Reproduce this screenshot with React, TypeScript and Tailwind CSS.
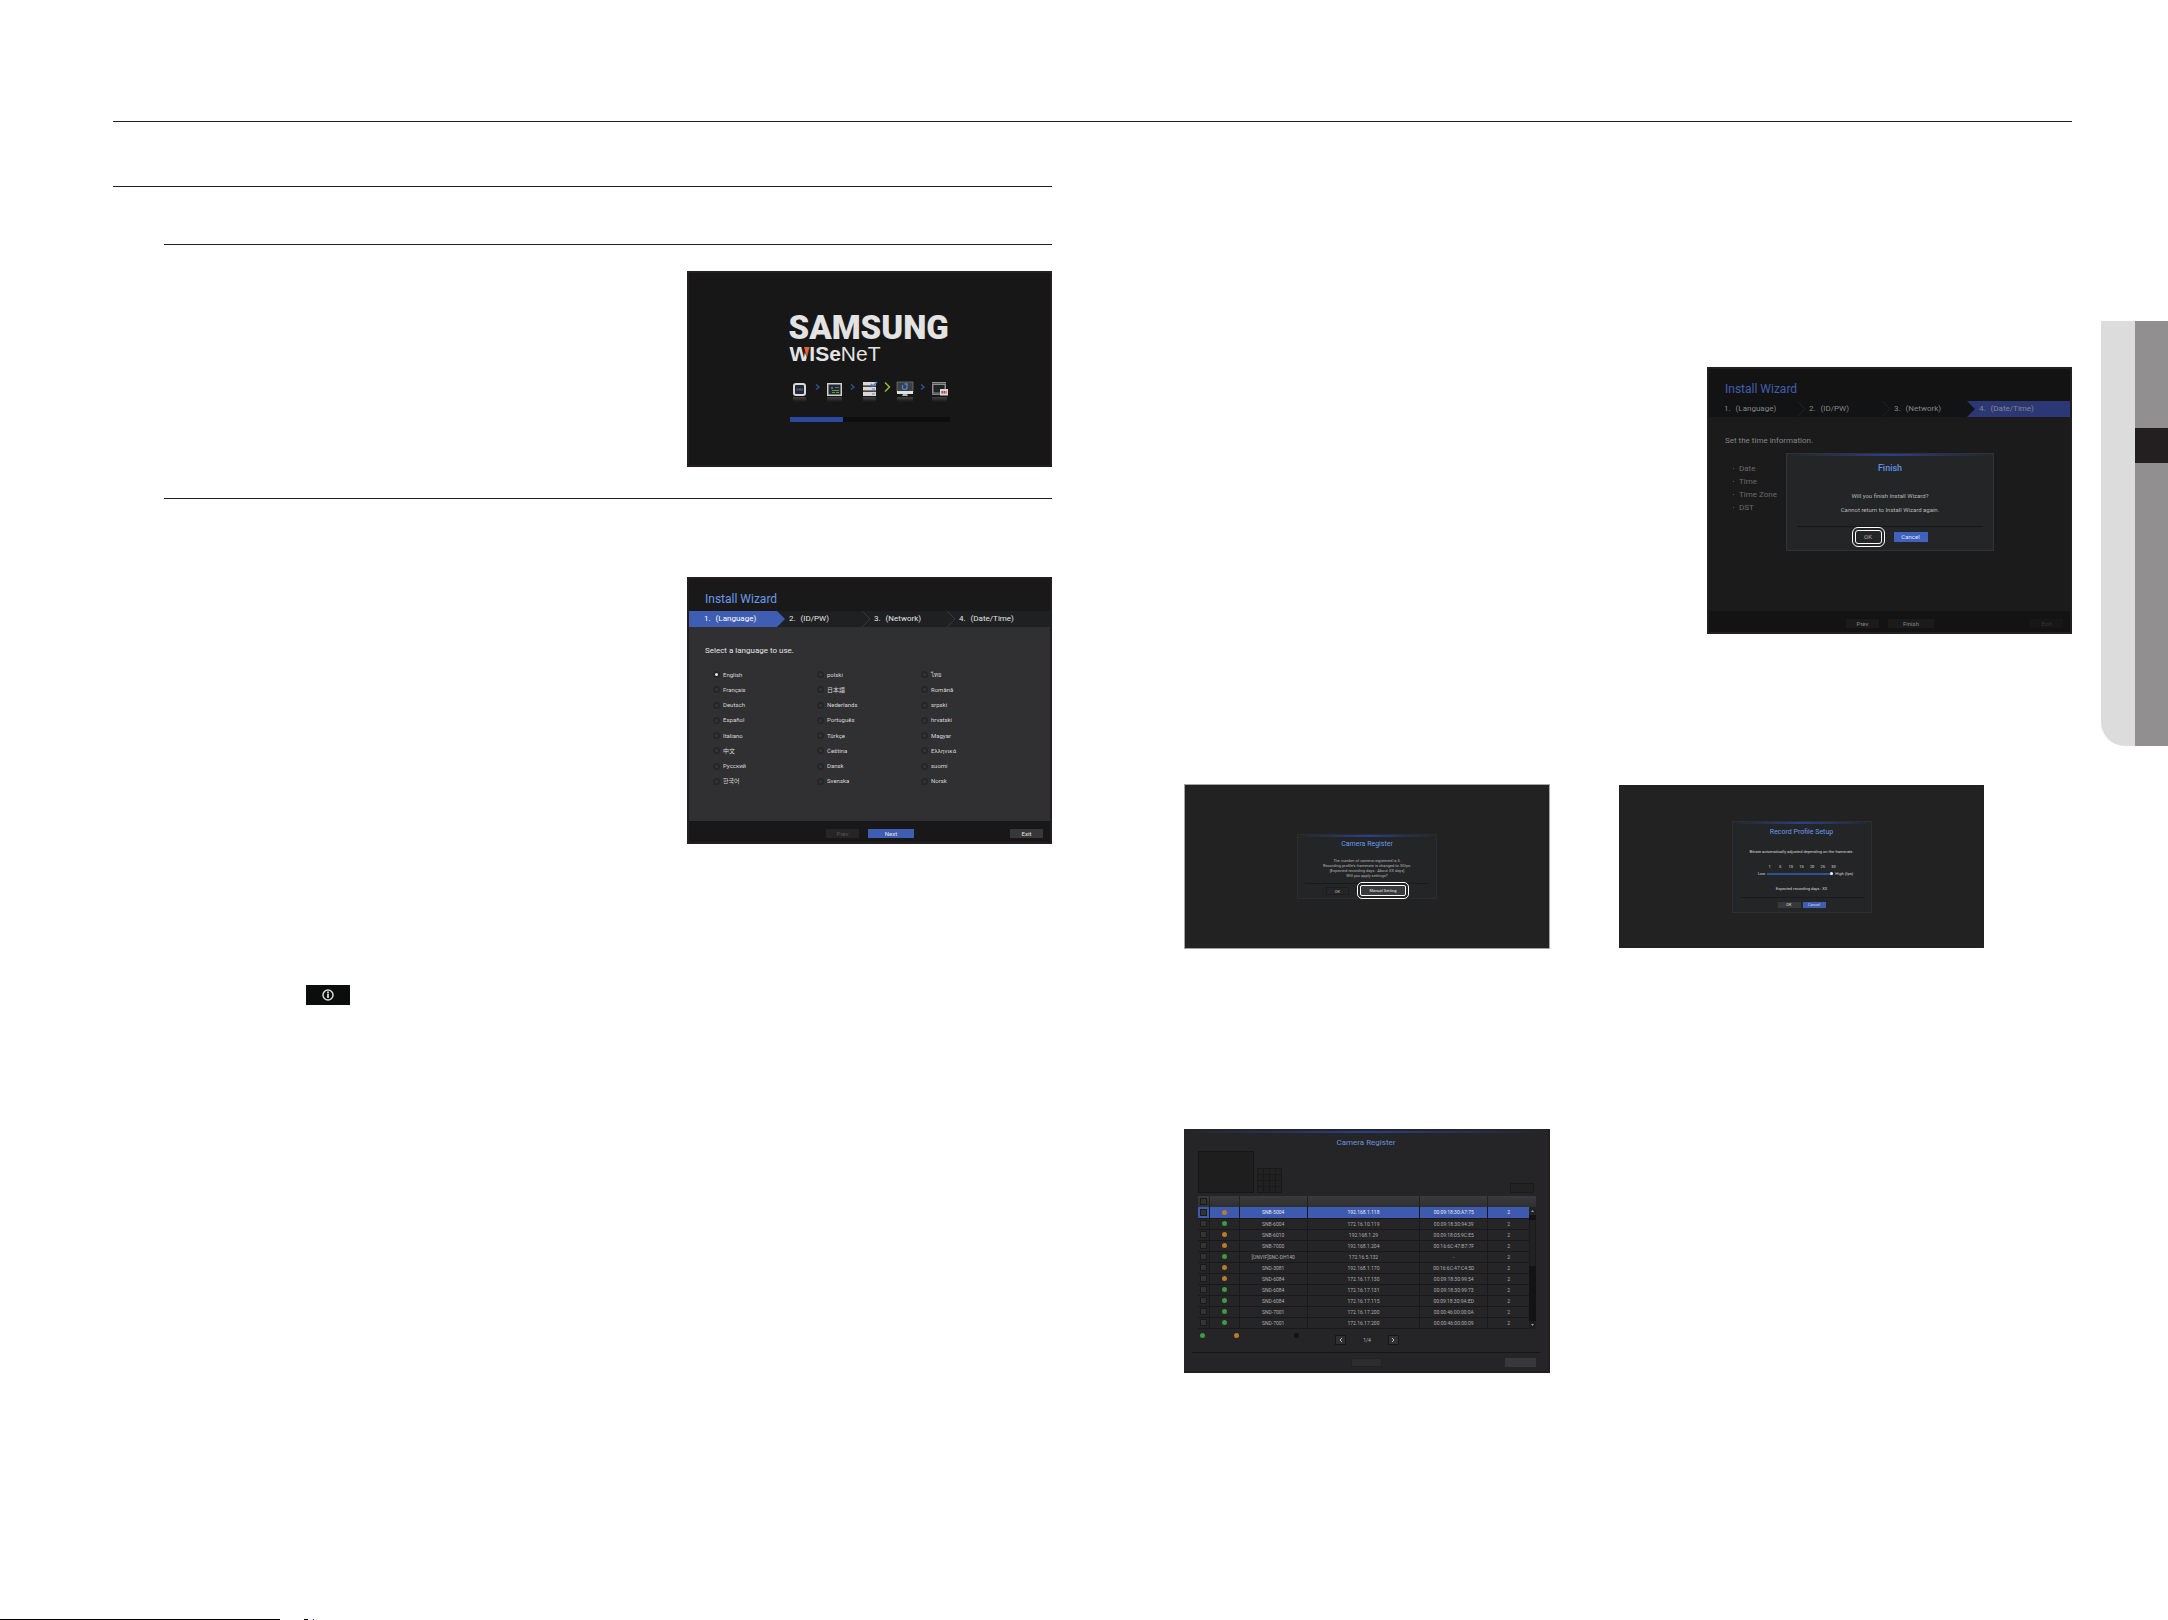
import type { ReactNode } from "react";
import clsx from "clsx";

const languages = [
  ["English", "polski", "ไทย"],
  ["Français", "日本語", "Română"],
  ["Deutsch", "Nederlands", "srpski"],
  ["Español", "Português", "hrvatski"],
  ["Italiano", "Türkçe", "Magyar"],
  ["中文", "Čeština", "Ελληνικά"],
  ["Русский", "Dansk", "suomi"],
  ["한국어", "Svenska", "Norsk"],
];

const steps = ["(Language)", "(ID/PW)", "(Network)", "(Date/Time)"];

const cameras = [
  { state: "fail", model: "SNB-5004", ip: "192.168.1.118", mac: "00:09:18:30:A7:75" },
  { state: "ok", model: "SNB-6004", ip: "172.16.10.119", mac: "00:09:18:30:94:39" },
  { state: "fail", model: "SNB-6010", ip: "192.168.1.29", mac: "00:09:18:05:9C:E5" },
  { state: "fail", model: "SNB-7000", ip: "192.168.1.204", mac: "00:16:6C:47:B7:7F" },
  { state: "ok", model: "[ONVIF]SNC-DH140", ip: "172.16.5.132", mac: "-" },
  { state: "fail", model: "SND-3081", ip: "192.168.1.170", mac: "00:16:6C:47:C4:5D" },
  { state: "fail", model: "SND-6084", ip: "172.16.17.130", mac: "00:09:18:30:99:54" },
  { state: "ok", model: "SND-6084", ip: "172.16.17.131", mac: "00:09:18:30:99:73" },
  { state: "ok", model: "SND-6084", ip: "172.16.17.115", mac: "00:09:18:30:9A:ED" },
  { state: "ok", model: "SND-7001", ip: "172.16.17.200", mac: "00:00:46:00:00:0A" },
  { state: "ok", model: "SND-7001", ip: "172.16.17.200", mac: "00:00:46:00:00:09" },
];

function Dot({ state }: { state: string }) {
  return (
    <span
      className={clsx(
        "block size-[5px] rounded-full",
        state === "ok" && "bg-[#3c9a40]",
        state === "fail" && "bg-[#b87b2a]",
        state === "off" && "bg-[#121212]"
      )}
    />
  );
}

function Glow() {
  return (
    <div className="h-[2px] bg-linear-to-r from-transparent via-[#2b3f8e] to-transparent" />
  );
}

function BootScreen() {
  return (
    <figure className="w-[365px] border-2 border-[#231f20] bg-[#171717] pt-[41px] pb-[43px]">
      <div className="mx-auto w-40">
        <div className="-ml-px whitespace-nowrap text-[33px] leading-7 font-black text-[#e4e3e3]">
          SAMSUNG
        </div>
        <div className="relative mt-0.5 font-['Liberation_Sans',sans-serif] text-[21px] leading-5 whitespace-nowrap text-[#e4e3e3]">
          <span className="font-bold">WISe</span>NeT
          <svg className="absolute top-[3px] left-[13px] h-[10px] w-[7px]" viewBox="0 0 7 10">
            <path d="M0 0H7L3.6 10Z" fill="#171717" />
            <path d="M1 0H6.5L3.7 10Z" fill="#e8622a" />
          </svg>
        </div>
        <svg className="mt-[17px] h-6 w-full" viewBox="0 0 160 24">
          <defs>
            <linearGradient id="mirror" x1="0" y1="0" x2="0" y2="1">
              <stop offset="0" stopColor="#fff" stopOpacity="0.18" />
              <stop offset="1" stopColor="#fff" stopOpacity="0" />
            </linearGradient>
          </defs>
          {/* chip */}
          <rect x="3" y="2" width="13" height="13" rx="3" fill="#d9d9d9" />
          <rect x="5" y="4" width="9" height="9" rx="1" fill="#26282b" />
          <path d="M6.5 7.5h2v2h-2zM9 7.5h2v2H9zM11.5 7.5h1.5v2h-1.5z" fill="#3c62a8" />
          {/* board */}
          <rect x="37" y="2" width="15" height="13" fill="#cfcfcf" />
          <rect x="38.5" y="3.5" width="12" height="10" fill="#26282b" />
          <path d="M41 6h2v2h-2zM45 6h4v1h-4z" fill="#3f6ec0" />
          <path d="M42 9h7v1h-7zM42 11h3v1h-3zM46 11h3v1h-3z" fill="#5e9a38" />
          {/* drives */}
          <path d="M73 1h13v3.5H73zM73 6h13v3.5H73zM73 11h13v4H73z" fill="#d9d9d9" />
          <path d="M73 4.5h13v1H73zM73 9.5h13v1H73z" fill="#777" />
          <path d="M81 3l2 2 4-4" stroke="#3f7fd6" strokeWidth="1.5" fill="none" />
          <path d="M82 8h3M82 13h3" stroke="#5f86b8" />
          {/* monitor */}
          <rect x="107" y="1" width="16" height="10" fill="#3c3f44" stroke="#85888c" strokeWidth="0.6" />
          <rect x="107" y="10" width="16" height="3" fill="#e0e0e0" />
          <path d="M113 13h4l1 2h-6z" fill="#b5b5b5" />
          <path d="M112.5 4v2.5c0 2.5 4.5 2.5 4.5 0V3h-2.5" stroke="#4a86dc" strokeWidth="1.3" fill="none" />
          {/* film */}
          <rect x="142" y="1" width="14" height="13" fill="#8d8d8d" />
          <rect x="143.5" y="4" width="11" height="7.5" fill="#202225" />
          <path d="M142.5 2.5h13M142.5 12.8h9" stroke="#202225" strokeDasharray="1 1" />
          <rect x="150" y="8" width="8" height="6.5" fill="#d8d5d5" />
          <path d="M151.5 11.3h5" stroke="#c43a3a" strokeWidth="2.5" strokeDasharray="1.5 .5" />
          <g fill="url(#mirror)">
            <rect x="3" y="16" width="13" height="5" />
            <rect x="37" y="16" width="15" height="5" />
            <rect x="73" y="16" width="13" height="5" />
            <rect x="107" y="16" width="16" height="5" />
            <rect x="142" y="16" width="15" height="5" />
          </g>
          <path d="M26 3.5l3 2.5-3 2.5M61 3.5l3 2.5-3 2.5M131 3.5l3 2.5-3 2.5" stroke="#33509f" strokeWidth="1.4" fill="none" />
          <path d="M95 1.5l4.5 4.5-4.5 4.5" stroke="#93bd2f" strokeWidth="1.5" fill="none" />
        </svg>
        <div className="mt-3 h-[5px] bg-[#0d0d0d]">
          <div className="h-full w-1/3 bg-[#2b479f]" />
        </div>
      </div>
    </figure>
  );
}

type WizardProps = { active: number; dim?: boolean; next: string; children: ReactNode };

function Wizard({ active, dim, next, children }: WizardProps) {
  const bar = dim ? "#111314" : "#1e2021";
  const blue = dim ? "#2c3876" : "#3e5db3";
  return (
    <figure
      className={clsx(
        "w-[365px] border-2 border-[#231f20]",
        dim ? "bg-[#1b1b1c] text-[#868687]" : "bg-[#303032] text-[#e4e4e4]"
      )}
    >
      <h2
        className={clsx(
          "pt-3 pb-1 pl-4 text-xs leading-4",
          dim ? "bg-[#131313] text-[#405eb2]" : "bg-[#191919] text-[#6a9bec]"
        )}
      >
        Install Wizard
      </h2>
      <ol className="grid h-4 grid-cols-[85fr_85fr_85fr_106fr] text-[8px] leading-4 whitespace-nowrap">
        {steps.map((step, i) => (
          <li
            key={step}
            className={clsx(
              "relative flex gap-[5px] pl-[15px]",
              i !== active && (dim ? "bg-[#111314]" : "bg-[#1e2021]"),
              i === active && (dim ? "bg-[#2c3876]" : "bg-[#3e5db3] text-white")
            )}
          >
            {i > 0 && (
              <svg className="absolute top-0 left-0 h-4 w-3" viewBox="0 0 12 16">
                <path d="M0 0H3L11 8L3 16H0Z" fill={i - 1 === active ? blue : bar} />
                <path
                  d="M3 0L11 8L3 16"
                  fill="none"
                  stroke={dim ? "#202122" : "#38393b"}
                  strokeWidth={i - 1 === active || i === active ? 0 : 1}
                />
              </svg>
            )}
            <span>{i + 1}.</span>
            <span>{step}</span>
          </li>
        ))}
      </ol>
      <div className="relative h-[194px] px-4 pt-[18px]">{children}</div>
      <div
        className={clsx(
          "flex gap-[9px] pt-2 pr-[7px] pb-1 pl-[137px] text-[6px] leading-[9px]",
          dim ? "bg-[#131313]" : "bg-[#181818]"
        )}
      >
        <button className={clsx("h-[9px] w-[33px]", dim ? "bg-[#1b1b1c]" : "bg-[#252526] text-[#555]")}>
          Prev
        </button>
        <button className={clsx("h-[9px] w-[46px]", dim ? "bg-[#1b1b1c]" : "bg-[#3e5db3]")}>
          {next}
        </button>
        <button
          className={clsx(
            "ml-auto h-[9px] w-[33px]",
            dim ? "bg-[#171717] text-[#363636]" : "bg-[#38383a]"
          )}
        >
          Exit
        </button>
      </div>
    </figure>
  );
}

function LanguageScreen() {
  return (
    <Wizard active={0} next="Next">
      <p className="text-[8px] leading-3">Select a language to use.</p>
      <div className="mt-[10px] grid h-[122px] grid-cols-[104fr_104fr_113fr] grid-rows-8 items-center pl-2 text-[6px] leading-2 text-[#d6d6d6]">
        {languages.flat().map((name) => (
          <label key={name} className="flex items-center gap-[3px]">
            <input
              type="radio"
              name="language"
              defaultChecked={name === "English"}
              className="size-[7px] appearance-none rounded-full border-2 border-[#262627] bg-[#363637] checked:bg-[#e8e8e8]"
            />
            {name}
          </label>
        ))}
      </div>
    </Wizard>
  );
}

function FinishScreen() {
  return (
    <Wizard active={3} dim next="Finish">
      <p className="text-[8px] leading-3">Set the time information.</p>
      <ul className="mt-[15px] pl-2 text-[8px] leading-[13px] text-[#6a6a6b]">
        {["Date", "Time", "Time Zone", "DST"].map((item) => (
          <li key={item} className="flex items-center gap-[5px]">
            <span className="size-px bg-[#555]" />
            {item}
          </li>
        ))}
      </ul>
      <div
        role="dialog"
        aria-label="Finish"
        className="absolute top-9 left-[77px] w-52 border border-[#323335] bg-[#242527] text-center text-[6px] text-[#b6b6b6]"
      >
        <Glow />
        <h3 className="mt-1.5 text-[9px] leading-3 font-medium text-[#5f90e2]">Finish</h3>
        <p className="mt-[15px] leading-[14px]">
          Will you finish Install Wizard?
          <br />
          Cannot return to Install Wizard again.
        </p>
        <hr className="mx-[10px] mt-[9px] border-[#161617]" />
        <div className="mt-[3px] mb-1.5 ml-0.5 flex items-center justify-center gap-3 leading-2">
          <button className="h-[14px] w-[27px] rounded-[3px] border border-white outline outline-offset-2 outline-white">
            OK
          </button>
          <button className="h-[10px] w-[34px] bg-[#3e62bd] text-[#dfe6f5]">Cancel</button>
        </div>
      </div>
    </Wizard>
  );
}

function ConfirmScreen() {
  return (
    <figure className="flex h-[165px] w-[366px] items-center justify-center border border-[#a5a4a4] bg-[#222222]">
      <div
        role="dialog"
        aria-label="Camera Register"
        className="w-[140px] border border-[#2c2d2f] bg-[#242527] text-center text-[4px] text-[#b4b4b5]"
      >
        <Glow />
        <h3 className="mt-[3px] text-[7px] leading-2 text-[#6a9bec]">Camera Register</h3>
        <p className="mt-[10px] leading-[5px]">
          The number of camera registered is 5.
          <br />
          Recording profile's framerate is changed to 30fps.
          <br />
          [Expected recording days : About XX days]
          <br />
          Will you apply settings?
        </p>
        <hr className="mx-[7px] mt-[5px] border-[#1a1a1b]" />
        <div className="mt-px mb-0.5 flex items-center justify-center gap-[11px] pr-[2px] leading-[7px]">
          <button className="h-2 w-[23px] border border-[#1d1d1e]">OK</button>
          <button className="h-[11px] w-[46px] rounded-[2px] border border-white bg-[#39393b] font-medium text-[#d0d0d0] outline outline-offset-2 outline-white">
            Manual Setting
          </button>
        </div>
      </div>
    </figure>
  );
}

function RecordScreen() {
  return (
    <figure className="flex h-[163px] w-[365px] items-center justify-center border border-[#231f20] bg-[#222222]">
      <div
        role="dialog"
        aria-label="Record Profile Setup"
        className="w-[140px] border border-[#2e2f31] bg-[#242527] text-center text-[4px] leading-[6px] text-[#dadada]"
      >
        <Glow />
        <h3 className="mt-1 text-[7px] leading-2 text-[#6a9bec]">Record Profile Setup</h3>
        <p className="mt-[13px]">Bitrate automatically adjusted depending on the framerate.</p>
        <div className="mx-auto mt-[9px] flex w-[70px] justify-between">
          {[1, 5, 10, 15, 20, 25, 30].map((n) => (
            <span key={n} className="w-1.5">
              {n}
            </span>
          ))}
        </div>
        <label className="mt-px flex items-center justify-center gap-0.5 pl-2">
          Low
          <input
            type="range"
            min={1}
            max={30}
            defaultValue={30}
            className="h-[2px] w-[66px] appearance-none bg-[#2d5596] [&::-webkit-slider-thumb]:size-[3px] [&::-webkit-slider-thumb]:appearance-none [&::-webkit-slider-thumb]:rounded-full [&::-webkit-slider-thumb]:bg-white"
          />
          High (fps)
        </label>
        <p className="mt-[9px]">Expected recording days : XX</p>
        <hr className="mx-[7px] mt-[5px] border-[#1a1a1b]" />
        <div className="mt-1 mb-1 flex justify-center gap-0.5">
          <button className="h-1.5 w-[23px] bg-[#39393b]">OK</button>
          <button className="h-1.5 w-[23px] bg-[#3e5db3]">Cancel</button>
        </div>
      </div>
    </figure>
  );
}

function RegisterScreen() {
  const box =
    "block size-[7px] appearance-none border border-[#19191a] bg-[#333334] mx-auto";
  return (
    <figure className="w-[366px] border-2 border-t-0 border-l-0 border-[#231f20] bg-[#252527] text-[5px] leading-[10px] text-[#acacac]">
      <div className="pt-0.5">
        <Glow />
      </div>
      <h2 className="pt-1 text-center text-[8px] leading-[12px] text-[#6c92dc]">
        Camera Register
      </h2>
      <div className="mt-0.5 flex items-end gap-[3px] px-[14px]">
        <div className="h-[42px] w-14 border border-[#161617] bg-[#1e1e1f]" />
        <div className="grid size-[25px] grid-cols-4 gap-px border border-[#191919] bg-[#191919]">
          {Array.from({ length: 16 }, (_, i) => (
            <span key={i} className="bg-[#212122]" />
          ))}
        </div>
        <button aria-label="Search" className="ml-auto h-[10px] w-6 border border-[#1a1a1b] bg-[#222223]" />
      </div>
      <div className="mt-[3px] flex pr-[12px] pl-[14px]">
        <table className="flex-1 table-fixed border-collapse text-center">
          <colgroup>
            <col className="w-[11px]" />
            <col className="w-[30px]" />
            <col className="w-[68px]" />
            <col className="w-[112px]" />
            <col className="w-[68px]" />
            <col className="w-[41px]" />
          </colgroup>
          <thead>
            <tr className="h-[11px] bg-linear-to-b from-[#3a3a3c] to-[#303032]">
              <th className="border-r border-[#222223] p-0">
                <input type="checkbox" aria-label="Select all" className={box} />
              </th>
              {[0, 1, 2, 3].map((n) => (
                <th key={n} className="border-r border-[#222223] p-0" />
              ))}
              <th className="p-0" />
            </tr>
          </thead>
          <tbody>
            {cameras.map((cam, i) => (
              <tr
                key={cam.mac}
                className={clsx(
                  "h-[11px] divide-x divide-[#19191a] border-b border-[#19191a]",
                  i === 0 && "bg-[#3e5aae] text-[#e6eaf6]"
                )}
              >
                <td className="p-0">
                  <input type="checkbox" aria-label={cam.model} className={box} />
                </td>
                <td className="p-0">
                  <div className="flex justify-center">
                    <Dot state={cam.state} />
                  </div>
                </td>
                <td className="p-0">{cam.model}</td>
                <td className="p-0">{cam.ip}</td>
                <td className="p-0">{cam.mac}</td>
                <td className="p-0">2</td>
              </tr>
            ))}
          </tbody>
        </table>
        <div className="flex w-[7px] flex-col">
          <div className="h-[11px] bg-linear-to-b from-[#3a3a3c] to-[#303032]" />
          <button aria-label="Scroll up" className="flex h-2 items-center justify-center bg-[#232324]">
            <svg className="h-[2px] w-[3px]" viewBox="0 0 3 2">
              <path d="M0 2L1.5 0L3 2Z" fill="#999" />
            </svg>
          </button>
          <div className="flex-1 bg-[#131313] pt-[5px]">
            <div className="h-[46px] border-x border-[#1a1a1a] bg-[#222223]" />
          </div>
          <button aria-label="Scroll down" className="flex h-2 items-center justify-center bg-[#1f1f20]">
            <svg className="h-[2px] w-[3px]" viewBox="0 0 3 2">
              <path d="M0 0L1.5 2L3 0Z" fill="#999" />
            </svg>
          </button>
        </div>
      </div>
      <div className="mt-1 grid grid-cols-[1fr_auto_1fr] pl-4">
        <div className="flex">
          <span className="w-[34px]">
            <Dot state="ok" />
          </span>
          <span className="w-[60px]">
            <Dot state="fail" />
          </span>
          <Dot state="off" />
        </div>
        <div className="mt-0.5 mr-[14px] flex items-center gap-[17px] text-[#b8b8b8]">
          <button aria-label="Previous page" className="flex h-[10px] w-[11px] items-center justify-center border border-[#161617] bg-[#303031]">
            <svg className="size-1" viewBox="0 0 4 4">
              <path d="M3 0L1 2L3 4" fill="none" stroke="#bbb" />
            </svg>
          </button>
          <span>1/4</span>
          <button aria-label="Next page" className="flex h-[10px] w-[11px] items-center justify-center border border-[#161617] bg-[#303031]">
            <svg className="size-1" viewBox="0 0 4 4">
              <path d="M1 0L3 2L1 4" fill="none" stroke="#bbb" />
            </svg>
          </button>
        </div>
      </div>
      <hr className="mx-2 mt-[7px] border-[#161617]" />
      <div className="mt-[5px] grid grid-cols-3 pr-[12px] pb-1 pl-[14px]">
        <button aria-label="Register" className="col-start-2 h-[9px] w-[31px] justify-self-center border border-[#212122] bg-[#2c2c2d]" />
        <button aria-label="Close" className="h-[9px] w-[31px] justify-self-end bg-[#38383a]" />
      </div>
    </figure>
  );
}

export default function App() {
  return (
    <div className="flex min-h-screen flex-col bg-white font-['Roboto','Noto_Sans_CJK_JP','Noto_Sans_CJK_KR',sans-serif]">
      <div className="flex gap-[29px]">
        <main className="min-w-0 flex-1 pt-[121px] pl-[113px]">
          <hr className="border-[#231f20]" />
          <div className="grid grid-cols-[939fr_888fr] gap-x-[132px]">
            <section className="pt-16">
              <hr className="border-[#231f20]" />
              <div className="pl-[51px]">
                <hr className="mt-[57px] border-[#231f20]" />
                <div className="mt-[26px] flex justify-end">
                  <BootScreen />
                </div>
                <hr className="mt-[31px] border-[#231f20]" />
                <div className="mt-[78px] flex justify-end">
                  <LanguageScreen />
                </div>
              </div>
              <span className="mt-[141px] ml-[193px] flex h-5 w-11 items-center justify-center bg-[#0b0c0c]">
                <svg className="size-3" viewBox="0 0 12 12" fill="none" stroke="#d6d6d6">
                  <circle cx="6" cy="6" r="5" strokeWidth="1.5" />
                  <path d="M6 4.5V9M6 2.6V4" strokeWidth="1.8" />
                </svg>
              </span>
            </section>

            <section className="pt-[245px]">
              <div className="flex justify-end">
                <FinishScreen />
              </div>
              <div className="mt-[150px] flex items-center gap-[69px]">
                <ConfirmScreen />
                <RecordScreen />
              </div>
              <div className="mt-[180px]">
                <RegisterScreen />
              </div>
            </section>
          </div>
        </main>

        <aside className="mt-[321px] flex h-[425px] w-[67px] overflow-hidden rounded-bl-[24px] bg-[#dcdcdc] pl-[34px]">
          <div className="flex-1 bg-[#918f90] pt-[107px]">
            <div className="h-[35px] bg-[#231f20]" />
          </div>
        </aside>
      </div>

      <footer className="mt-auto flex h-px">
        <span className="w-[280px] bg-black" />
        <span className="ml-6 w-1 bg-black" />
        <span className="ml-[5px] w-px bg-[#3a1ea0]" />
      </footer>
    </div>
  );
}
